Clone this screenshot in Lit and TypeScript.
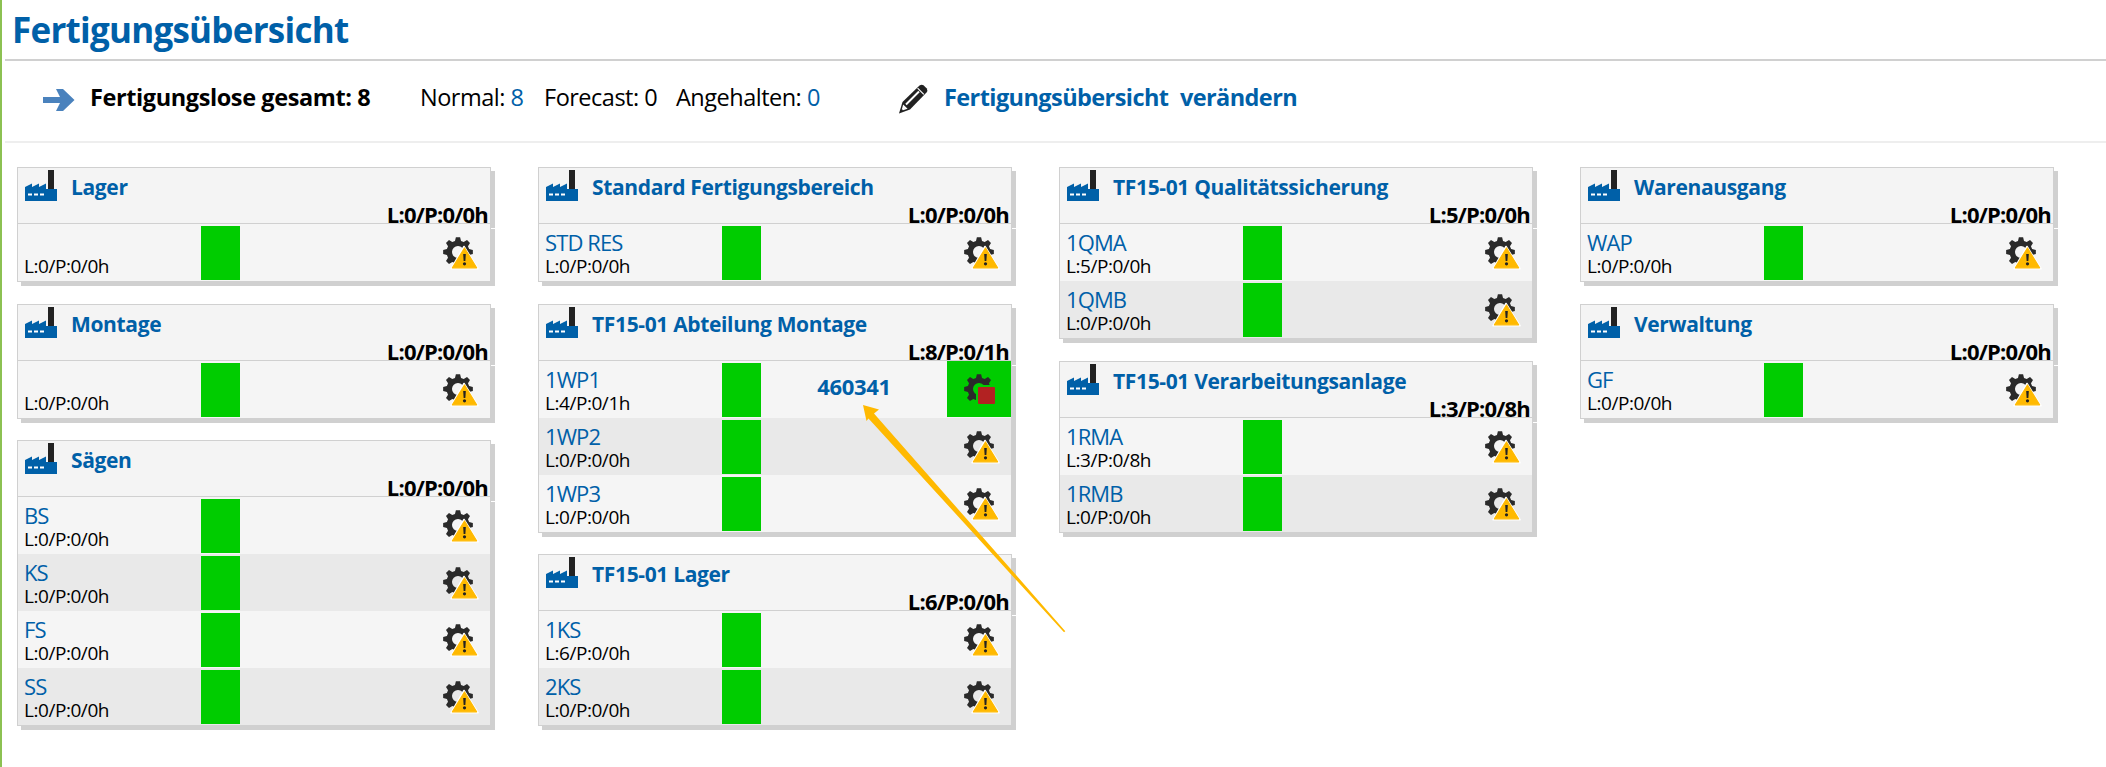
import { LitElement, html, css, svg } from "lit";
import { customElement } from "lit/decorators.js";

interface Row { name: string; val: string; order?: string; stop?: boolean; }
interface Card { title: string; sum: string; rows: Row[]; }

const v0 = "L:0/P:0/0h";
const columns: Card[][] = [
  [
    { title: "Lager", sum: v0, rows: [{ name: "", val: v0 }] },
    { title: "Montage", sum: v0, rows: [{ name: "", val: v0 }] },
    { title: "Sägen", sum: v0, rows: [
      { name: "BS", val: v0 }, { name: "KS", val: v0 }, { name: "FS", val: v0 }, { name: "SS", val: v0 } ] },
  ],
  [
    { title: "Standard Fertigungsbereich", sum: v0, rows: [{ name: "STD RES", val: v0 }] },
    { title: "TF15-01 Abteilung Montage", sum: "L:8/P:0/1h", rows: [
      { name: "1WP1", val: "L:4/P:0/1h", order: "460341", stop: true },
      { name: "1WP2", val: v0 }, { name: "1WP3", val: v0 } ] },
    { title: "TF15-01 Lager", sum: "L:6/P:0/0h", rows: [
      { name: "1KS", val: "L:6/P:0/0h" }, { name: "2KS", val: v0 } ] },
  ],
  [
    { title: "TF15-01 Qualitätssicherung", sum: "L:5/P:0/0h", rows: [
      { name: "1QMA", val: "L:5/P:0/0h" }, { name: "1QMB", val: v0 } ] },
    { title: "TF15-01 Verarbeitungsanlage", sum: "L:3/P:0/8h", rows: [
      { name: "1RMA", val: "L:3/P:0/8h" }, { name: "1RMB", val: v0 } ] },
  ],
  [
    { title: "Warenausgang", sum: v0, rows: [{ name: "WAP", val: v0 }] },
    { title: "Verwaltung", sum: v0, rows: [{ name: "GF", val: v0 }] },
  ],
];

function gearPath(cx: number, cy: number, R: number, r: number, hole: number, teeth = 8): string {
  const pts: string[] = [];
  const step = (Math.PI * 2) / teeth;
  for (let i = 0; i < teeth; i++) {
    const a = i * step - Math.PI / 2;
    const list: [number, number][] = [
      [a - step * 0.34, r], [a - step * 0.18, R], [a + step * 0.18, R], [a + step * 0.34, r],
    ];
    for (const [an, rad] of list) pts.push(`${(cx + rad * Math.cos(an)).toFixed(2)} ${(cy + rad * Math.sin(an)).toFixed(2)}`);
  }
  const outer = "M" + pts.join("L") + "Z";
  const inner = `M${cx - hole} ${cy}a${hole} ${hole} 0 1 0 ${hole * 2} 0a${hole} ${hole} 0 1 0 ${-hole * 2} 0Z`;
  return outer + inner;
}
const GEAR = gearPath(15, 15, 15, 11.5, 6);

const gearWarn = svg`<svg class="gear" viewBox="0 0 36 33" width="36" height="33">
  <path d=${GEAR} fill="#2a2a2a" fill-rule="evenodd"/>
  <path d="M21 9.5 L35 31.8 H8 Z" fill="#fff" stroke="#fff" stroke-width="1.6" stroke-linejoin="round"/>
  <path d="M21.5 11 L33.6 30.8 H9.4 Z" fill="#ffb900" stroke="#ffb900" stroke-width="1.2" stroke-linejoin="round"/>
  <path d="M20.2 17h2.6l-.45 7h-1.7z" fill="#222"/><circle cx="21.5" cy="26.8" r="1.6" fill="#222"/>
</svg>`;
const gearStop = svg`<svg class="gear" viewBox="0 0 36 33" width="36" height="33">
  <path d=${GEAR} fill="#2a2a2a" fill-rule="evenodd"/>
  <rect x="12" y="11" width="20" height="21" fill="#00cc00"/>
  <rect x="14" y="13" width="17" height="17" rx="1" fill="#b22222"/>
</svg>`;
const factory = svg`<svg class="factory" viewBox="0 0 32 31" width="32" height="31">
  <rect x="23" y="0" width="6" height="20" fill="#222"/>
  <path d="M0 31V17L7 13.5V17L14 13.5V17L21 13.5V19H32V31Z" fill="#0060a8"/>
  <path d="M3 23.5h4v2H3zM9 23.5h4v2H9zM15 23.5h4v2h-4z" fill="#fff"/>
</svg>`;
const arrowIcon = svg`<svg class="arrow" viewBox="0 0 32 22" width="32" height="22">
  <path d="M0 8H17L13 0H20L31.5 11L20 22H13L17 14H0Z" fill="#4a82bd"/>
</svg>`;
const pencil = svg`<svg class="pencil" viewBox="0 0 30 30" width="30" height="30">
  <path d="M1 29.5 L4.5 18 L21.5 1.5 Q23.5 0 25.5 1.2 L28.8 4.5 Q30 6.5 28.5 8.5 L12 25.5 Z" fill="#222"/>
  <path d="M8 20.5 L21 7.5" stroke="#fff" stroke-width="2"/>
  <path d="M19.6 4.2 L25.8 10.4" stroke="#fff" stroke-width="1.2"/>
  <path d="M5.2 20.5 L9.6 24.8 L3.4 26.7 Z" fill="#fff"/>
  <path d="M3.6 24.8 L5.2 26.4 L2.4 27.8 Z" fill="#222"/>
</svg>`;

@customElement("app-root")
export class AppRoot extends LitElement {
  static styles = css`
    :host {
      display: block; position: relative; min-height: 767px; box-sizing: border-box;
      border-left: 2px solid #8cc152; background: #fff; overflow: hidden;
      font-family: "Open Sans", "Noto Sans", "Liberation Sans", sans-serif; color: #000;
    }
    .blue { color: #0060a8; }
    .title {
      margin: 0 0 0 3px; height: 59px; border-bottom: 2px solid #d0d0d0; padding-left: 7px;
      font-size: 35px; font-weight: 700; line-height: 59px; color: #0060a8; letter-spacing: -0.75px;
    }
    .summary {
      margin-left: 3px; height: 80px; border-bottom: 2px solid #eee; display: flex; align-items: center;
      padding-left: 38px; font-size: 23.5px; letter-spacing: -0.5px;
    }
    .summary svg { flex: none; display: block; }
    .summary span.total, .summary span.stat, .summary span.link { margin-bottom: 8px; }
    .arrow { margin-bottom: 2px; }
    .pencil { margin-bottom: 5px; }
    .total { font-weight: 700; margin-left: 15px; width: 330px; flex: none; letter-spacing: -0.4px; }
    .stat { flex: none; }
    .normal { width: 124px; }
    .forecast { width: 132px; }
    .held { width: 222px; }
    .link { font-weight: 700; margin-left: 16px; color: #0060a8; letter-spacing: -0.58px; word-spacing: 6px; }
    .board { display: flex; gap: 47px; padding: 24px 0 0 15px; align-items: flex-start; }
    .col { display: flex; flex-direction: column; gap: 21.5px; width: 474px; flex: none; }
    .card {
      position: relative; box-sizing: border-box; border: 1px solid #d0d0d0; background: #f4f4f4;
      box-shadow: 4px 4px 0 #d0d0d0;
    }
    .card::after {
      content: ""; position: absolute; right: -5px; top: 60px; width: 4px; height: 1px; background: #fff;
    }
    .head {
      position: relative; height: 56px; box-sizing: border-box; border-bottom: 1px solid #d0d0d0;
      display: flex; align-items: flex-start; padding: 2px 0 0 7px;
    }
    .head svg { display: block; flex: none; }
    .head h2 {
      margin: 0 0 0 14px; font-size: 21px; font-weight: 700; line-height: 26px; padding-top: 4px;
      color: #0060a8; letter-spacing: -0.35px; white-space: nowrap;
    }
    .sum {
      position: absolute; right: 2px; bottom: -2px; font-size: 22px; font-weight: 700; line-height: 22px;
      letter-spacing: -0.8px;
    }
    .row { height: 57px; box-sizing: border-box; display: flex; background: #f5f5f5; }
    .row:nth-child(even) { background: #e9e9e9; }
    .info { width: 183px; flex: none; padding-left: 6px; padding-bottom: 4px; box-sizing: border-box; display: flex; flex-direction: column; justify-content: flex-end; }
    .name { font-size: 22px; line-height: 25px; color: #0060a8; letter-spacing: -0.9px; }
    .val { font-size: 19px; line-height: 22px; letter-spacing: -0.45px; }
    .bar { width: 39px; flex: none; margin: 2px 0 1px; background: #00cc00; }
    .order { flex: 1; text-align: center; font-size: 22px; font-weight: 700; color: #0060a8; line-height: 50px; letter-spacing: -0.3px; }
    .state { width: 64px; flex: none; padding: 13px 0 0 17px; box-sizing: border-box; margin-bottom: 1px; }
    .state.stop { background: #00cc00; }
    .state svg { display: block; }
    .note { position: absolute; left: -2px; top: 0; pointer-events: none; }
  `;

  private renderRow(r: Row) {
    return html`<div class="row">
      <div class="info">
        ${r.name ? html`<div class="name">${r.name}</div>` : ""}
        <div class="val">${r.val}</div>
      </div>
      <div class="bar"></div>
      <div class="order">${r.order ?? ""}</div>
      <div class="state ${r.stop ? "stop" : ""}">${r.stop ? gearStop : gearWarn}</div>
    </div>`;
  }

  private renderCard(c: Card) {
    return html`<section class="card">
      <div class="head">${factory}<h2>${c.title}</h2><span class="sum">${c.sum}</span></div>
      <div class="rows">${c.rows.map((r) => this.renderRow(r))}</div>
    </section>`;
  }

  render() {
    return html`
      <h1 class="title">Fertigungsübersicht</h1>
      <div class="summary">
        ${arrowIcon}
        <span class="total">Fertigungslose gesamt: 8</span>
        <span class="stat normal">Normal: <span class="blue">8</span></span>
        <span class="stat forecast">Forecast: 0</span>
        <span class="stat held">Angehalten: <span class="blue">0</span></span>
        ${pencil}
        <span class="link">Fertigungsübersicht  verändern</span>
      </div>
      <div class="board">
        ${columns.map((col) => html`<div class="col">${col.map((c) => this.renderCard(c))}</div>`)}
      </div>
      <svg class="note" width="2106" height="767" viewBox="0 0 2106 767">
        <path d="M863 405 L879 409.5 L874 413.5 L1065.3 631.2 L1064 632.2 L868.5 418.5 L866.5 421 Z" fill="#ffb900"/>
      </svg>
    `;
  }
}
